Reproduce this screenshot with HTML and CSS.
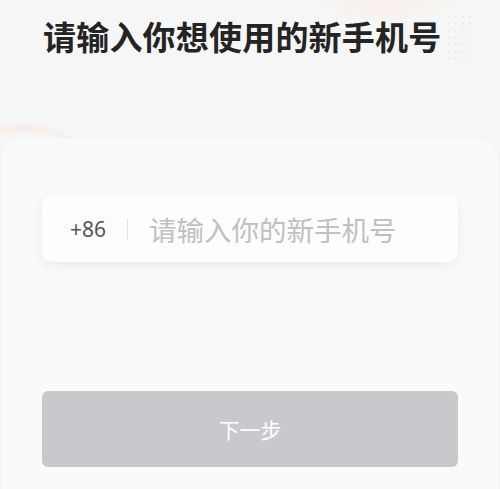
FILE: index.html
```html
<!DOCTYPE html>
<html lang="zh-CN">
<head>
<meta charset="utf-8">
<title>更换手机号</title>
<link rel="stylesheet" href="styles.css">
</head>
<body>
<div class="page">
  <div class="deco-blob"></div>
  <div class="deco-dots"></div>
  <div class="deco-arc"></div>
  <header class="header">
    <h1 class="title">请输入你想使用的新手机号</h1>
  </header>
  <main class="card">
    <div class="phone-field">
      <span class="prefix">+86</span>
      <span class="divider"></span>
      <span class="placeholder">请输入你的新手机号</span>
    </div>
    <button class="next-btn" type="button">下一步</button>
  </main>
</div>
</body>
</html>
```

FILE: styles.css
```css
html, body {
  margin: 0;
  padding: 0;
}
body {
  background: #f6f6f6;
  font-family: "Noto Sans CJK SC", "Noto Sans", sans-serif;
  width: 500px;
  height: 489px;
  overflow: hidden;
}
.page {
  position: relative;
  width: 500px;
  height: 489px;
  display: flex;
  flex-direction: column;
  overflow: hidden;
}
.deco-blob {
  position: absolute;
  left: 270px;
  top: -150px;
  width: 230px;
  height: 170px;
  border-radius: 50%;
  background: radial-gradient(ellipse at 50% 60%, rgba(250, 225, 210, 0.5), rgba(250, 235, 225, 0) 70%);
}
.deco-dots {
  position: absolute;
  left: 445px;
  top: 13px;
  width: 30px;
  height: 48px;
  background-image: radial-gradient(circle, rgba(235, 222, 210, 0.5) 1px, transparent 1.4px);
  background-size: 7px 7px;
}
.deco-arc {
  position: absolute;
  left: -30px;
  top: 124px;
  width: 110px;
  height: 60px;
  border-radius: 50%;
  border-top: 8px solid rgba(250, 232, 218, 0.4);
  box-sizing: border-box;
}
.header {
  position: relative;
  padding: 16px 0 0 43px;
  height: 139px;
  box-sizing: border-box;
}
.title {
  margin: 0;
  font-size: 33px;
  line-height: 40px;
  font-weight: 600;
  color: #242424;
  letter-spacing: 0.2px;
}
.card {
  position: relative;
  flex: 1;
  background: #fafafa;
  border-radius: 20px 20px 0 0;
  margin: 0 2px;
  padding: 56px 40px 0;
  display: flex;
  flex-direction: column;
}
.phone-field {
  height: 67px;
  background: #fdfdfd;
  border-radius: 10px;
  box-shadow: 0 4px 12px rgba(0, 0, 0, 0.06);
  display: flex;
  align-items: center;
  padding-left: 28px;
}
.prefix {
  font-family: "Noto Sans", sans-serif;
  font-size: 21px;
  color: #555;
}
.divider {
  width: 1px;
  height: 20px;
  background: #e2e2e2;
  margin: 0 21px;
}
.placeholder {
  font-size: 27.5px;
  color: #c0c0c0;
}
.next-btn {
  margin-top: 129px;
  height: 76px;
  border: none;
  border-radius: 6px;
  background: #c8c9cc;
  color: #fff;
  font-family: "Noto Sans CJK SC", sans-serif;
  font-size: 21px;
  padding: 0;
}
```
